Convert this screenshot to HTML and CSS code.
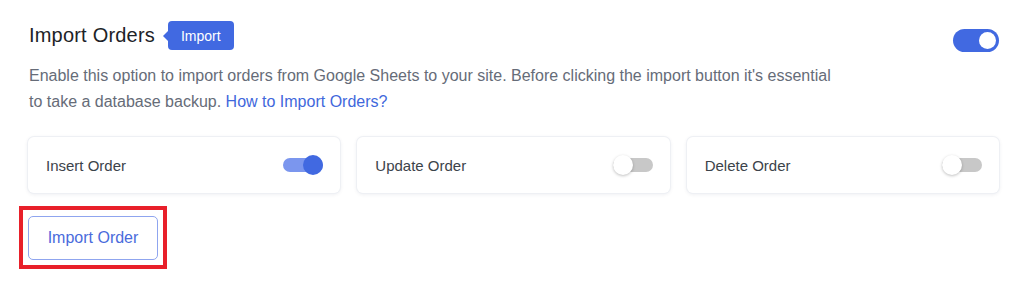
FILE: index.html
```html
<!DOCTYPE html>
<html lang="en">
<head>
<meta charset="utf-8">
<title>Import Orders</title>
<link rel="stylesheet" href="styles.css">
</head>
<body>
<div class="panel">
  <div class="header">
    <div class="title-group">
      <h2 class="title">Import Orders</h2>
      <span class="badge">Import</span>
    </div>
    <span class="toggle toggle-lg is-on"><span class="knob"></span></span>
  </div>
  <p class="desc">Enable this option to import orders from Google Sheets to your site. Before clicking the import button it's essential<br>to take a database backup. <a class="link" href="#">How to Import Orders?</a></p>
  <div class="cards">
    <div class="card">
      <span class="card-label">Insert Order</span>
      <span class="switch is-on"><span class="thumb"></span></span>
    </div>
    <div class="card">
      <span class="card-label">Update Order</span>
      <span class="switch"><span class="thumb"></span></span>
    </div>
    <div class="card">
      <span class="card-label">Delete Order</span>
      <span class="switch"><span class="thumb"></span></span>
    </div>
  </div>
  <div class="highlight">
    <button class="btn-outline" type="button">Import Order</button>
  </div>
</div>
</body>
</html>
```

FILE: styles.css
```css
* { box-sizing: border-box; }

html, body {
  margin: 0;
  background: #ffffff;
  font-family: "Liberation Sans", Arial, sans-serif;
}

.panel {
  padding: 21px 25px 0 28px;
}

.header {
  display: flex;
  align-items: center;
  justify-content: space-between;
  height: 29px;
}

.title-group {
  display: flex;
  align-items: center;
}

.title {
  margin: 0 0 0 1px;
  font-size: 20px;
  font-weight: 400;
  color: #1d2327;
  line-height: 29px;
  letter-spacing: 0.2px;
}

.badge {
  position: relative;
  margin-left: 13px;
  height: 29px;
  padding: 0 13px;
  display: inline-flex;
  align-items: center;
  background: #4169e1;
  color: #ffffff;
  font-size: 14px;
  border-radius: 4px;
}

.badge::before {
  content: "";
  position: absolute;
  left: -5px;
  top: 50%;
  margin-top: -5px;
  border-top: 5px solid transparent;
  border-bottom: 5px solid transparent;
  border-right: 5px solid #4169e1;
}

.toggle-lg {
  position: relative;
  display: inline-block;
  width: 46px;
  height: 23px;
  border-radius: 12px;
  background: #4169e1;
  margin-top: 9px;
}

.toggle-lg .knob {
  position: absolute;
  top: 3px;
  right: 3px;
  width: 17px;
  height: 17px;
  border-radius: 50%;
  background: #ffffff;
}

.desc {
  margin: 13px 0 0 1px;
  font-size: 16px;
  line-height: 26px;
  color: #666c78;
}

.link {
  color: #3f68dc;
  text-decoration: none;
}

.cards {
  display: grid;
  grid-template-columns: repeat(3, 1fr);
  gap: 17px;
  margin-top: 22px;
}

.card {
  height: 56px;
  display: flex;
  align-items: center;
  justify-content: space-between;
  padding: 0 17px 0 18px;
  background: #ffffff;
  border-radius: 6px;
  box-shadow: 0 0 0 1px #eef0f4, 0 1px 4px rgba(30, 40, 80, 0.10);
}

.card-label {
  font-size: 15px;
  color: #3c434a;
}

.switch {
  position: relative;
  display: inline-block;
  width: 40px;
  height: 14px;
  border-radius: 7px;
  background: #c8c8c8;
}

.switch .thumb {
  position: absolute;
  top: -3px;
  left: 0;
  width: 20px;
  height: 20px;
  border-radius: 50%;
  background: #ffffff;
  box-shadow: 0 1px 3px rgba(0, 0, 0, 0.25);
}

.switch.is-on {
  background: #7b96ee;
}

.switch.is-on .thumb {
  left: auto;
  right: 0;
  background: #4169e1;
  box-shadow: none;
}

.highlight {
  display: inline-block;
  margin: 13px 0 0 -9px;
  padding: 6px 5px 5px 5px;
  border: 4px solid #e8202a;
}

.btn-outline {
  display: block;
  width: 130px;
  height: 44px;
  padding: 0;
  background: #ffffff;
  border: 1px solid #8fa5ef;
  border-radius: 5px;
  color: #4a6bdc;
  font-family: "Liberation Sans", Arial, sans-serif;
  font-size: 16px;
  cursor: pointer;
}
```
